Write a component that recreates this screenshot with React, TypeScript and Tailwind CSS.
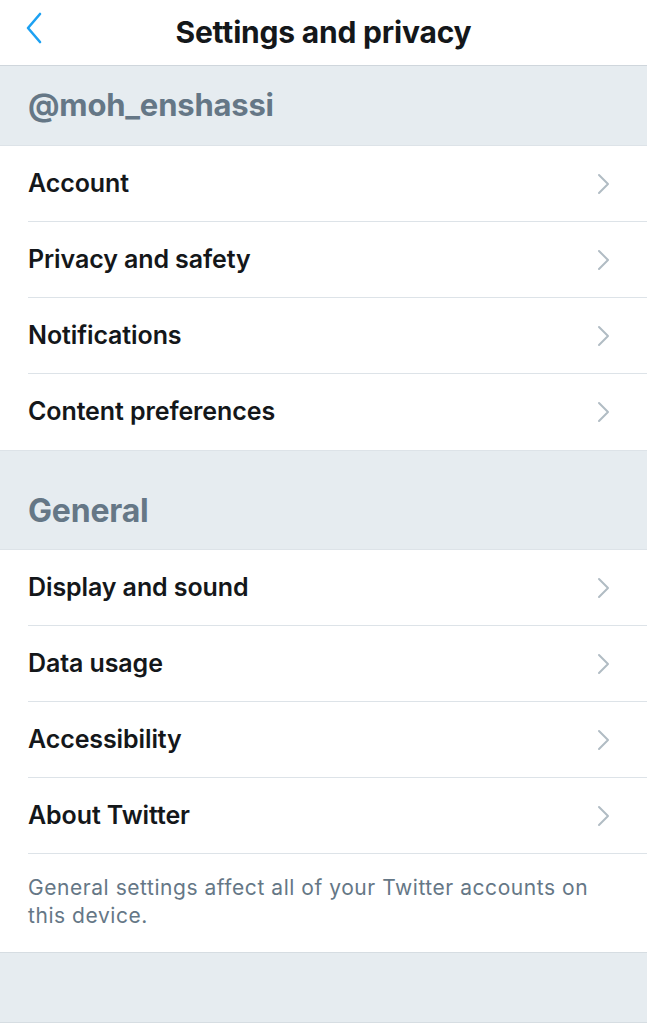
const accountItems = ["Account", "Privacy and safety", "Notifications", "Content preferences"];
const generalItems = ["Display and sound", "Data usage", "Accessibility", "About Twitter"];

const Chevron = () => (
  <svg width="16" height="24" viewBox="0 0 16 24" fill="none" className="shrink-0">
    <path d="M4 3l9 9-9 9" stroke="#b1bcc4" strokeWidth="2" strokeLinecap="round" strokeLinejoin="round" />
  </svg>
);

const Row = ({ label, last }: { label: string; last?: boolean }) => (
  <div className="pl-7">
    <div
      className={`h-[76px] flex items-center justify-between pr-9 ${
        last ? "" : "border-b border-[#dde3e8]"
      }`}
    >
      <span className="text-[25px] font-semibold text-[#14171a] tracking-[-0.1px]">{label}</span>
      <Chevron />
    </div>
  </div>
);

const App = () => {
  return (
    <div className="w-[647px] h-[1024px] bg-white font-['Inter',sans-serif] overflow-hidden">
      <div className="h-[66px] relative flex items-center justify-center border-b border-[#cfd6dc]">
        <svg
          width="20"
          height="32"
          viewBox="0 0 20 32"
          fill="none"
          className="absolute left-[24px] top-[12px]"
        >
          <path d="M16 2L4 16l12 14" stroke="#1da1f2" strokeWidth="2.6" strokeLinecap="round" strokeLinejoin="round" />
        </svg>
        <h1 className="text-[30px] font-bold text-[#14171a] tracking-[-0.2px]">Settings and privacy</h1>
      </div>

      <div className="h-[80px] bg-[#e6ecf0] flex items-center pl-7 border-b border-[#dde3e8]">
        <span className="text-[31px] font-bold text-[#657786] tracking-[-0.2px]">@moh_enshassi</span>
      </div>

      {accountItems.map((item, i) => (
        <Row key={item} label={item} last={i === accountItems.length - 1} />
      ))}

      <div className="h-[100px] bg-[#e6ecf0] border-t border-[#dde3e8] border-b flex items-end pl-7 pb-[14px]">
        <span className="text-[32px] font-bold text-[#657786] tracking-[-0.2px]">General</span>
      </div>

      {generalItems.map((item) => (
        <Row key={item} label={item} />
      ))}

      <div className="pl-7 pr-9 pt-[20px] pb-[22px] text-[21px] leading-[28px] tracking-[0.55px] text-[#657786]">
        General settings affect all of your Twitter accounts on this device.
      </div>

      <div className="h-[71px] bg-[#e6ecf0] border-t border-b border-[#d6dde2]" />
    </div>
  );
};

export default App;
